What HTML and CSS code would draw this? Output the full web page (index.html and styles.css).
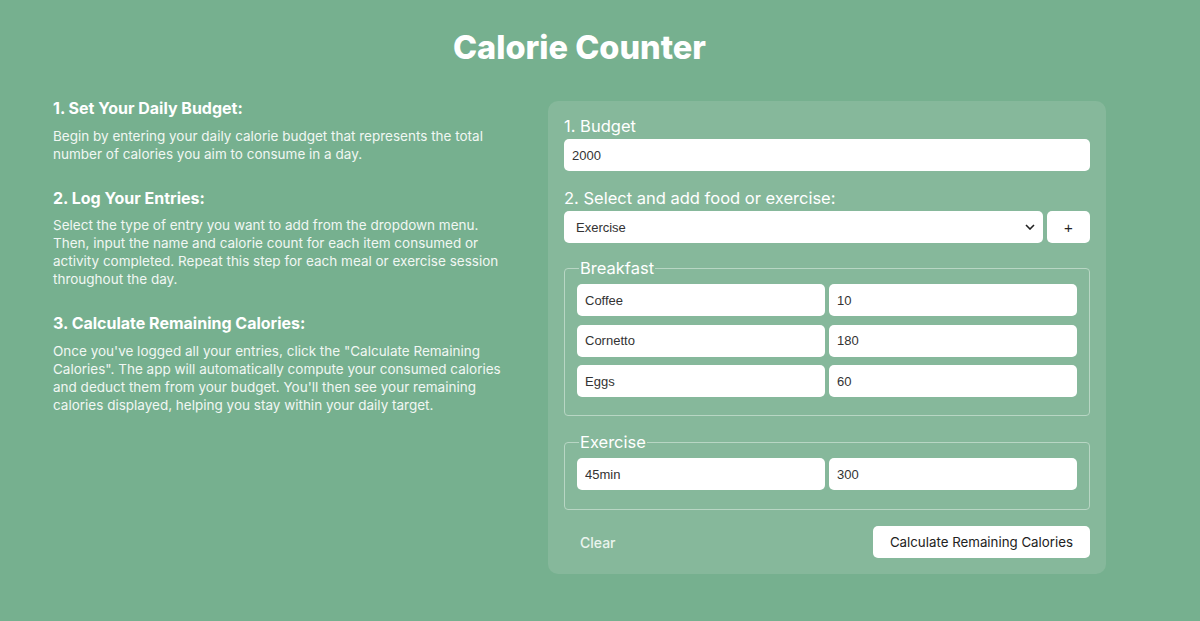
FILE: index.html
```html
<!DOCTYPE html>
<html lang="en">
<head>
<meta charset="utf-8">
<title>Calorie Counter</title>
<link rel="stylesheet" href="styles.css">
</head>
<body>
<main class="page">
  <h1 class="title">Calorie Counter</h1>
  <div class="layout">
    <section class="instructions">
      <h2>1. Set Your Daily Budget:</h2>
      <p>Begin by entering your daily calorie budget that represents the total number of calories you aim to consume in a day.</p>
      <h2>2. Log Your Entries:</h2>
      <p>Select the type of entry you want to add from the dropdown menu. Then, input the name and calorie count for each item consumed or activity completed. Repeat this step for each meal or exercise session throughout the day.</p>
      <h2>3. Calculate Remaining Calories:</h2>
      <p>Once you've logged all your entries, click the "Calculate Remaining Calories". The app will automatically compute your consumed calories and deduct them from your budget. You'll then see your remaining calories displayed, helping you stay within your daily target.</p>
    </section>
    <form class="panel">
      <label class="label" for="budget">1. Budget</label>
      <input class="field" id="budget" type="text" value="2000">
      <label class="label second" for="entry">2. Select and add food or exercise:</label>
      <div class="select-row">
        <select class="field select" id="entry">
          <option>Exercise</option>
        </select>
        <button type="button" class="plus">+</button>
      </div>
      <fieldset class="group">
        <legend>Breakfast</legend>
        <div class="entry"><input class="field" value="Coffee"><input class="field" value="10"></div>
        <div class="entry"><input class="field" value="Cornetto"><input class="field" value="180"></div>
        <div class="entry"><input class="field" value="Eggs"><input class="field" value="60"></div>
      </fieldset>
      <fieldset class="group exercise">
        <legend>Exercise</legend>
        <div class="entry"><input class="field" value="45min"><input class="field" value="300"></div>
      </fieldset>
      <div class="actions">
        <button type="button" class="clear">Clear</button>
        <button type="button" class="calc">Calculate Remaining Calories</button>
      </div>
    </form>
  </div>
</main>
</body>
</html>
```
FILE: styles.css
```css
* { box-sizing: border-box; }
html, body { margin: 0; }
body {
  background: #76b08f;
  color: #fff;
  font-family: Inter, "Noto Sans", sans-serif;
  height: 621px;
  overflow: hidden;
}
.page {
  padding: 29px 0 0 53px;
  width: 1106px;
}
.title {
  margin: 0 0 34px;
  text-align: center;
  font-size: 32.5px;
  font-weight: 800;
  line-height: 38px;
}
.layout {
  display: grid;
  grid-template-columns: 455px 558px;
  column-gap: 40px;
}
.instructions { margin-top: -3px; }
.instructions h2 {
  margin: 0 0 9px;
  font-size: 16px;
  font-weight: 700;
  line-height: 20px;
}
.instructions p {
  margin: 0 0 25px;
  font-size: 13.5px;
  line-height: 18px;
  font-weight: 400;
  color: #f1f7f3;
}
.instructions p:nth-of-type(2) { margin-top: -1px; }
.panel {
  background: #86b89b;
  border-radius: 10px;
  padding: 14px 16px 16px;
  display: flex;
  flex-direction: column;
}
.label {
  font-size: 16.5px;
  line-height: 22px;
  margin-bottom: 2px;
}
.label.second { margin-top: 16px; margin-bottom: 2px; }
.field {
  height: 32px;
  border: none;
  border-radius: 5px;
  background: #fff;
  font-family: "Liberation Sans", Arial, sans-serif;
  font-size: 13px;
  color: #333;
  padding: 0 8px;
  width: 100%;
}
.select-row {
  display: flex;
  gap: 4px;
}
.select {
  flex: 1;
  padding-left: 12px;
  appearance: none;
  background: #fff url("data:image/svg+xml,%3Csvg xmlns='http://www.w3.org/2000/svg' width='10' height='6' viewBox='0 0 10 6'%3E%3Cpath d='M1 1l4 4 4-4' fill='none' stroke='%23222' stroke-width='1.6'/%3E%3C/svg%3E") no-repeat right 8px center;
}
.plus {
  width: 43px;
  height: 32px;
  border: none;
  border-radius: 5px;
  background: #fff;
  font-size: 15px;
  color: #222;
}
.group {
  margin: 15px 0 0;
  border: 1px solid #b8d6c4;
  border-radius: 4px;
  padding: 6px 12px 18px;
}
.group legend {
  font-size: 16.5px;
  line-height: 20px;
  padding: 0 1px;
  margin-left: 2px;
}
.group.exercise { margin-top: 16px; padding-bottom: 19px; }
.entry {
  display: grid;
  grid-template-columns: 1fr 1fr;
  gap: 4px;
  margin-top: 8.5px;
}
.entry:first-of-type { margin-top: 0; }
.actions {
  display: flex;
  justify-content: space-between;
  align-items: center;
  margin-top: 16px;
}
.clear {
  background: none;
  border: none;
  color: #eaf4ee;
  font-family: Inter, sans-serif;
  font-size: 14px;
  font-weight: 500;
  padding: 0 16px;
}
.calc {
  background: #fff;
  border: none;
  border-radius: 5px;
  height: 32px;
  padding: 0 17px;
  font-family: Inter, sans-serif;
  font-size: 13.3px;
  color: #222;
}
```
